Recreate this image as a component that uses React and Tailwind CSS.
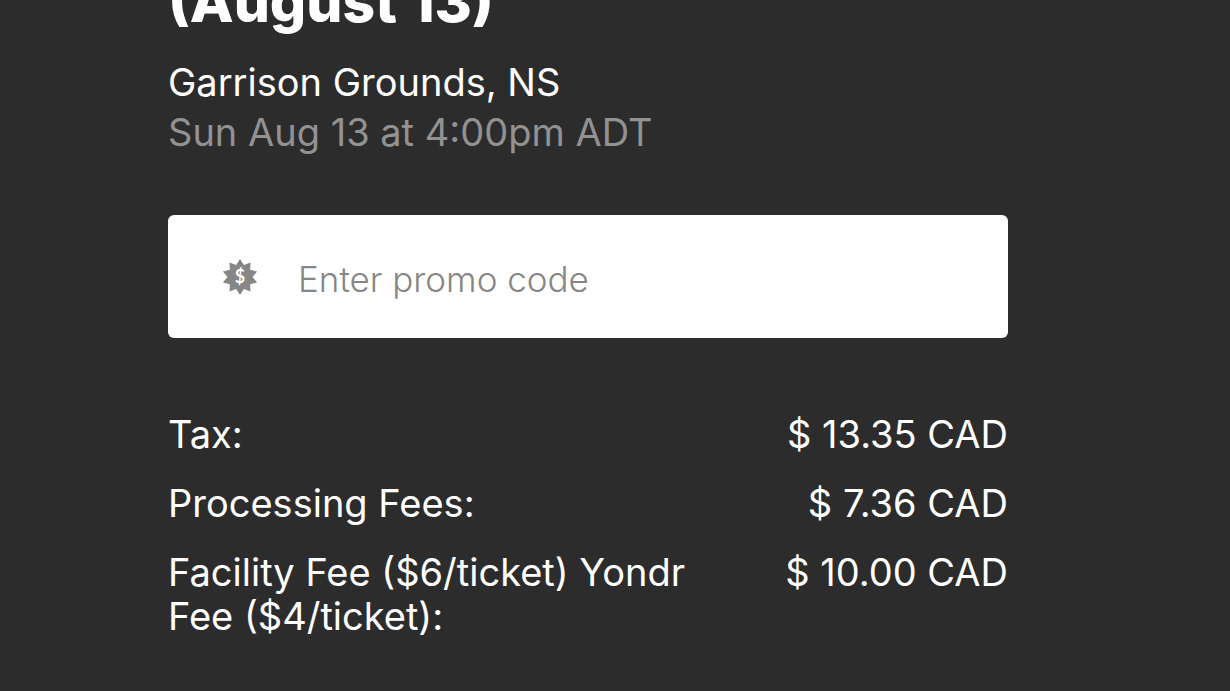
const fees = [
  { label: "Tax:", amount: "$ 13.35 CAD" },
  { label: "Processing Fees:", amount: "$ 7.36 CAD" },
  { label: "Facility Fee ($6/ticket) Yondr Fee ($4/ticket):", amount: "$ 10.00 CAD" },
];

// Ten-pointed burst, alternating outer and inner vertices.
const burst = Array.from({ length: 20 }, (_, i) => {
  const radius = i % 2 === 0 ? 18 : 12.5;
  const angle = (i * Math.PI) / 10;
  return `${(18 + radius * Math.sin(angle)).toFixed(2)},${(18 - radius * Math.cos(angle)).toFixed(2)}`;
}).join(" ");

function PromoIcon() {
  return (
    <svg viewBox="0 0 36 36" className="size-9 shrink-0" aria-hidden="true">
      <polygon points={burst} fill="#868686" />
      <text x="18" y="24" textAnchor="middle" fill="#ffffff" className="font-['Lato',sans-serif] text-[18px] font-bold">
        $
      </text>
    </svg>
  );
}

export default function App() {
  return (
    <main className="min-h-screen overflow-hidden bg-[#2c2c2c] pr-[222px] pb-10 pl-[168px] font-['Inter',sans-serif] text-[38px] text-white">
      <header className="-mt-8">
        <h1 className="text-[57px] leading-[68px] font-extrabold">(August 13)</h1>
        <p className="mt-[21px] leading-[50px]">Garrison Grounds, NS</p>
        <p className="leading-[50px] text-[#929292]">Sun Aug 13 at 4:00pm ADT</p>
      </header>

      <label className="mt-[58px] flex h-[123px] items-center gap-10 rounded-md bg-white pr-6 pl-[54px]">
        <PromoIcon />
        <input
          type="text"
          aria-label="Promo code"
          placeholder="Enter promo code"
          className="min-w-0 flex-1 bg-transparent pt-1 text-[35px] leading-[50px] font-light text-[#444444] outline-none placeholder:text-[#868686]"
        />
      </label>

      <dl className="mt-[74px] flex flex-col gap-[25px] leading-11">
        {fees.map((fee) => (
          <div key={fee.label} className="flex items-start justify-between gap-6">
            <dt className="max-w-[560px]">{fee.label}</dt>
            <dd className="whitespace-nowrap">{fee.amount}</dd>
          </div>
        ))}
      </dl>
    </main>
  );
}
